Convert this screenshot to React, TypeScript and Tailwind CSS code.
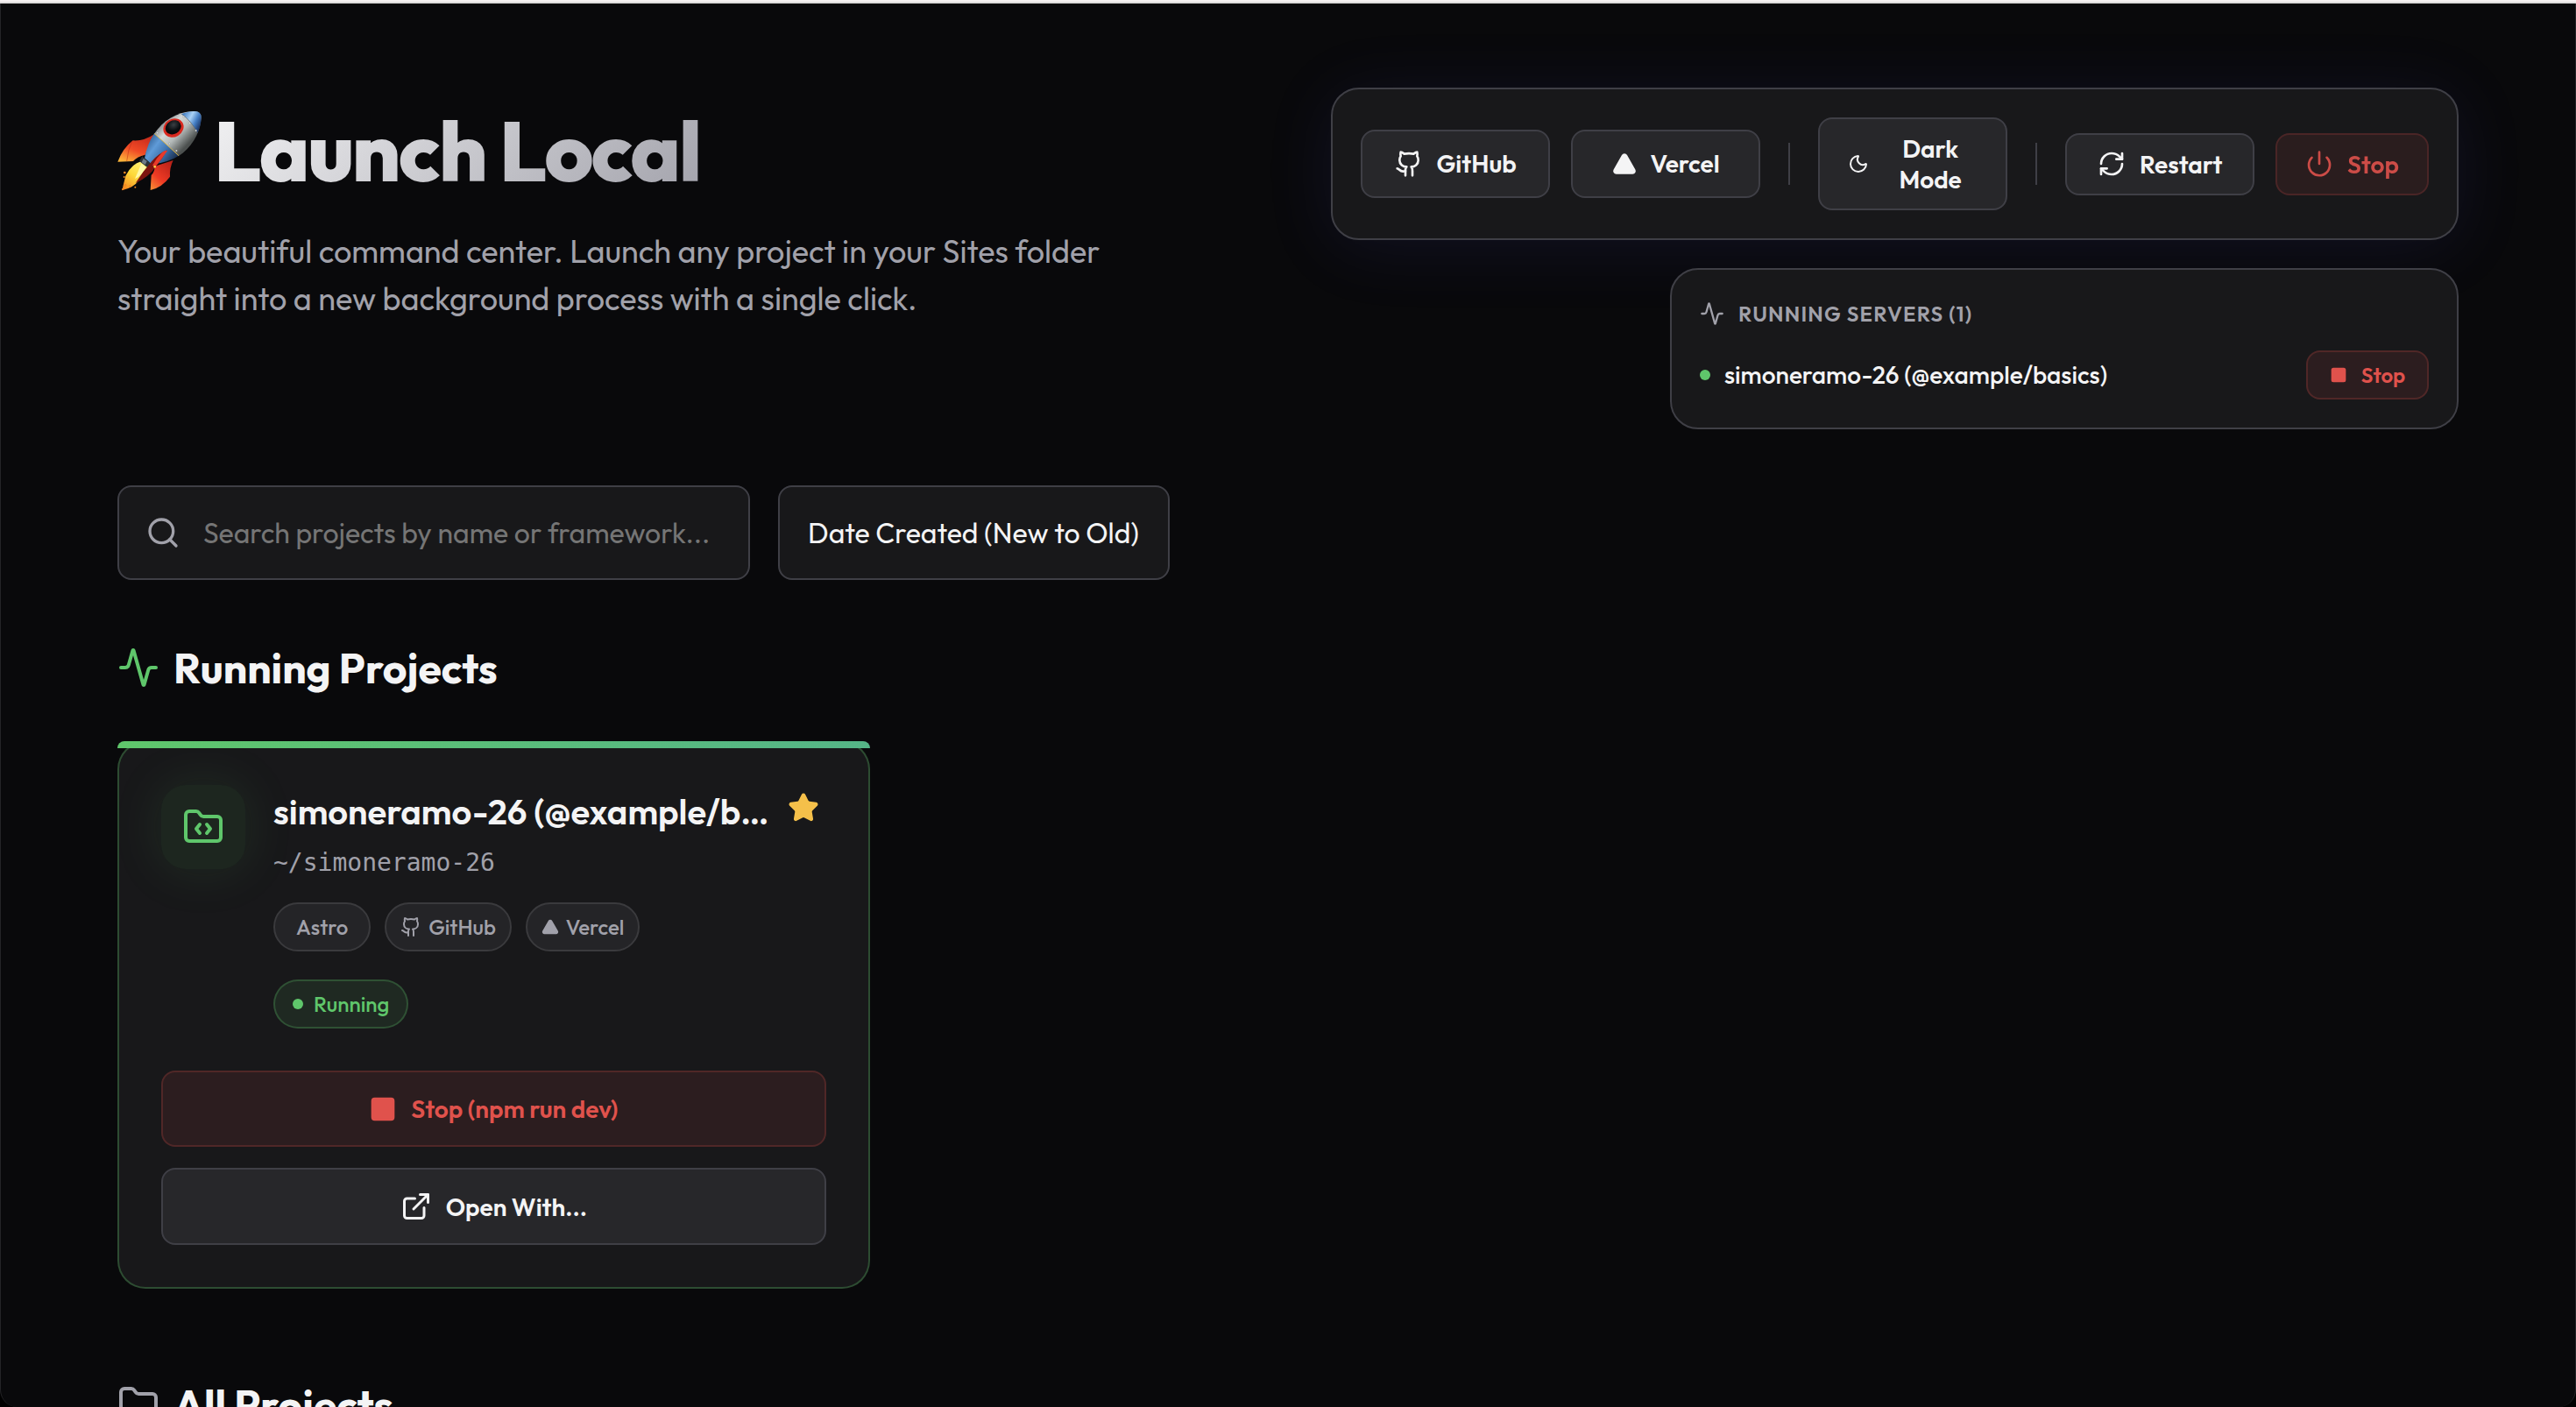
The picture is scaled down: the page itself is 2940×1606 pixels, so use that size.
import type { ReactNode } from "react";
import {
  Activity,
  ExternalLink,
  Folder,
  FolderCode,
  Github,
  Moon,
  Power,
  RefreshCw,
  Search,
  Square,
  Star,
  Triangle,
} from "lucide-react";

interface Project {
  name: string;
  path: string;
  framework: string;
  command: string;
}

const runningProjects: Project[] = [
  {
    name: "simoneramo-26 (@example/basics)",
    path: "~/simoneramo-26",
    framework: "Astro",
    command: "npm run dev",
  },
];

const toolButton =
  "flex w-[216px] items-center justify-center gap-4 rounded-2xl border-2 border-[#3f3f46] bg-[#27272a] px-8 py-4 text-[28px] font-semibold";
const dangerButton =
  "flex items-center justify-center gap-4 border-2 border-[#e0524c]/20 bg-[#e0524c]/10 font-semibold text-[#e0524c]";
const badge =
  "flex items-center gap-2 rounded-full border-2 py-2 text-[24px]/[36px] font-medium";

const Rocket = () => (
  <svg viewBox="402 372 288 288" className="h-24 w-24" role="img" aria-label="Rocket">
    <defs>
      <linearGradient id="finLeft" x1="0.7" y1="0" x2="0.2" y2="1">
        <stop offset="0" stopColor="#c62a1c" />
        <stop offset="0.55" stopColor="#f04a26" />
        <stop offset="1" stopColor="#fdb53a" />
      </linearGradient>
      <linearGradient id="finRight" x1="0.8" y1="0" x2="0.1" y2="1">
        <stop offset="0" stopColor="#b82219" />
        <stop offset="0.6" stopColor="#ee3a24" />
        <stop offset="1" stopColor="#f98a35" />
      </linearGradient>
      <linearGradient id="hull" x1="0.2" y1="0.2" x2="0.75" y2="0.7">
        <stop offset="0" stopColor="#85888a" />
        <stop offset="0.3" stopColor="#d4d8d8" />
        <stop offset="0.6" stopColor="#b4bab9" />
        <stop offset="1" stopColor="#4c504f" />
      </linearGradient>
      <linearGradient id="blueHull" x1="0" y1="0.2" x2="0.9" y2="0.8">
        <stop offset="0" stopColor="#2c5688" />
        <stop offset="0.35" stopColor="#5f9bd8" />
        <stop offset="0.65" stopColor="#3f73ae" />
        <stop offset="1" stopColor="#1c3253" />
      </linearGradient>
      <linearGradient id="nose" x1="0.1" y1="0.1" x2="1" y2="0.6">
        <stop offset="0" stopColor="#3f7cc4" />
        <stop offset="0.4" stopColor="#a9d1f5" />
        <stop offset="0.7" stopColor="#4680c6" />
        <stop offset="1" stopColor="#1b3566" />
      </linearGradient>
      <linearGradient id="flame" x1="0.8" y1="0" x2="0.1" y2="1">
        <stop offset="0" stopColor="#fff27a" />
        <stop offset="0.5" stopColor="#fdd93a" />
        <stop offset="1" stopColor="#f4831f" />
      </linearGradient>
      <radialGradient id="glass" cx="0.6" cy="0.35" r="0.7">
        <stop offset="0" stopColor="#3a3f44" />
        <stop offset="0.6" stopColor="#0b0d10" />
        <stop offset="1" stopColor="#050607" />
      </radialGradient>
    </defs>
    <path d="M455 481Q492 484 528 460L497 530Q470 536 456 552L403 554Q420 508 455 481Z" fill="url(#finLeft)" />
    <path d="M452 484Q438 512 434 552" stroke="#b92a17" strokeWidth="1.5" fill="none" />
    <path d="M593 549Q580 575 582 605Q555 642 515 651L518 600Q532 585 528 570Z" fill="url(#finRight)" />
    <path d="M483 553L513 570Q506 604 472 622Q458 642 418 652Q424 625 430 602Q452 560 483 553Z" fill="url(#flame)" />
    <path d="M484 560L500 572Q490 598 462 612Q474 585 484 560Z" fill="#fff9a8" />
    <path d="M487 535L516 560L507 575L477 552Z" fill="#2b3238" />
    <path d="M491 543L503 552L497 564L485 556Z" fill="#6d7b88" />
    <path d="M528 458C558 414 602 384 662 381Q691 381 689 405C684 462 652 508 612 534Z" fill="url(#hull)" />
    <path d="M528 457L612 533Q580 555 520 563L495 541Q504 494 528 457Z" fill="url(#blueHull)" />
    <path d="M528 457L612 533" stroke="#d8b64a" strokeWidth="3" />
    <path d="M621 390Q650 380 668 381Q690 382 689 405Q688 432 676 455Q656 414 621 390Z" fill="url(#nose)" />
    <path d="M621 390Q656 414 676 455" stroke="#5d6468" strokeWidth="2" fill="none" />
    <ellipse cx="594" cy="438" rx="36" ry="31" transform="rotate(-30 594 438)" fill="#d9291f" />
    <ellipse cx="593" cy="436" rx="28" ry="23" transform="rotate(-30 593 436)" fill="url(#glass)" />
    <path d="M572 514Q545 524 520 552Q488 588 464 627Q510 606 534 570Q556 545 572 514Z" fill="#7d140f" />
    <path d="M573 516Q566 512 552 525Q535 542 522 566L532 571Q552 548 573 516Z" fill="#e83a2a" />
    <g fill="#e8eaea" stroke="#6b6f70" strokeWidth="1">
      <circle cx="629" cy="400" r="3" />
      <circle cx="650" cy="422" r="3" />
      <circle cx="671" cy="447" r="3" />
      <circle cx="539" cy="455" r="3" />
      <circle cx="580" cy="492" r="3" />
      <circle cx="604" cy="516" r="3" />
    </g>
    <circle cx="530" cy="571" r="4" fill="#fdd44a" />
    <g fill="#f08a24">
      <circle cx="427" cy="591" r="4" />
      <circle cx="425" cy="606" r="3" />
      <circle cx="428" cy="634" r="5" />
      <circle cx="445" cy="638" r="4" />
      <circle cx="420" cy="648" r="3" />
      <circle cx="463" cy="641" r="3" />
      <circle cx="438" cy="622" r="4" fill="#fbb02f" />
    </g>
  </svg>
);

const Divider = () => <div className="mx-2 h-12 w-[2px] shrink-0 bg-[#3f3f46]" />;

const Toolbar = () => (
  <div className="flex items-center gap-6 rounded-[32px] border-2 border-[#3f3f46] bg-[#18181a] p-8 shadow-[0_8px_80px_rgba(99,102,241,0.1)]">
    <a href="#github" className={toolButton}>
      <Github size={32} />
      GitHub
    </a>
    <a href="#vercel" className={toolButton}>
      <Triangle size={28} fill="currentColor" />
      Vercel
    </a>
    <Divider />
    <button className={`${toolButton} leading-[35px]`}>
      <Moon size={24} className="shrink-0" />
      <span className="flex-1">Dark Mode</span>
    </button>
    <Divider />
    <button className={`${toolButton} leading-[35px]`}>
      <RefreshCw size={32} />
      Restart
    </button>
    <button className={`${dangerButton} rounded-2xl px-8 py-4 text-[28px]/[35px] opacity-90`}>
      <Power size={32} />
      Stop
    </button>
  </div>
);

const RunningServers = () => (
  <div className="w-[900px] rounded-[32px] border-2 border-[#3f3f46] bg-[#18181a] p-8">
    <h3 className="mb-6 flex items-center gap-4 text-[24px]/[36px] font-semibold uppercase tracking-wider text-[#a1a1aa]">
      <Activity size={28} />
      Running Servers ({runningProjects.length})
    </h3>
    {runningProjects.map((project) => (
      <div key={project.path} className="flex items-center justify-between">
        <span className="flex items-center gap-4 text-[28px]/[42px] font-medium">
          <span className="h-3 w-3 rounded-full bg-[#5fc66b]" />
          {project.name}
        </span>
        <button className={`${dangerButton} h-14 w-[140px] rounded-2xl text-[24px]`}>
          <Square size={20} fill="currentColor" />
          Stop
        </button>
      </div>
    ))}
  </div>
);

const ProjectCard = ({ project }: { project: Project }) => (
  <article className="relative rounded-[32px] border-2 border-[#5fc66b]/30 bg-[#18181a] p-12">
    <div className="absolute -inset-x-[2px] -top-[2px] h-2 rounded-t-lg bg-linear-to-r from-[#5fc66b] to-[#55b587]" />
    <div className="mb-12 flex gap-8">
      <div className="flex h-24 w-24 shrink-0 items-center justify-center rounded-[28px] bg-[#5fc66b]/8 text-[#5fc66b] shadow-[0_0_60px_rgba(95,198,107,0.12)]">
        <FolderCode size={48} />
      </div>
      <div className="min-w-0 flex-1">
        <div className="flex items-start gap-2">
          <h3 className="flex-1 truncate text-[40px]/[60px] font-semibold">{project.name}</h3>
          <button aria-label="Remove from favorites" className="p-2 text-[#f5c04a]">
            <Star size={36} fill="currentColor" />
          </button>
        </div>
        <p className="mt-2 font-['DejaVu_Sans_Mono',monospace] text-[28px]/[42px] text-[#a1a1aa]">
          {project.path}
        </p>
        <div className="mt-6 flex flex-wrap gap-x-4 gap-y-8">
          <span className={`${badge} border-[#3a3a3d] bg-[#242427] px-6 text-[#a1a1aa]`}>
            {project.framework}
          </span>
          <a href="#github" className={`${badge} border-[#3a3a3d] bg-[#242427] px-4 text-[#a1a1aa]`}>
            <Github size={24} />
            GitHub
          </a>
          <a href="#vercel" className={`${badge} border-[#3a3a3d] bg-[#242427] px-4 text-[#a1a1aa]`}>
            <Triangle size={20} fill="currentColor" />
            Vercel
          </a>
          <div className="flex w-full">
            <span className={`${badge} border-[#5fc66b]/25 bg-[#5fc66b]/10 px-5 text-[#5fc66b]`}>
              <span className="mr-1 h-3 w-3 rounded-full bg-[#5fc66b]" />
              Running
            </span>
          </div>
        </div>
      </div>
    </div>
    <div className="flex flex-col gap-6">
      <button className={`${dangerButton} rounded-2xl py-6 text-[28px]/[35px]`}>
        <Square size={32} fill="currentColor" />
        Stop ({project.command})
      </button>
      <button className="flex items-center justify-center gap-4 rounded-2xl border-2 border-[#3f3f46] bg-[#27272a] py-6 text-[28px]/[35px] font-semibold">
        <ExternalLink size={36} />
        Open With...
      </button>
    </div>
  </article>
);

const SectionTitle = ({ icon, children }: { icon: ReactNode; children: ReactNode }) => (
  <h2 className="mb-12 flex items-center gap-4 text-[48px]/[72px] font-bold">
    {icon}
    {children}
  </h2>
);

export default function App() {
  return (
    <div className="flex h-screen flex-col overflow-hidden bg-black font-['Outfit','Lato',sans-serif] text-[#f4f4f5]">
      <div className="h-1 shrink-0 border-b-2 border-[#dedcdd] bg-[#f6f1f2]" />
      <main className="min-h-0 flex-1 overflow-hidden rounded-b-[20px] border-x border-[#242427] bg-[#09090b] px-[133px] pt-24">
        <header className="mb-16 flex items-start justify-between gap-16">
          <div className="max-w-[1200px]">
            <h1 className="mb-4 flex items-center gap-[14px] text-[96px]/[144px] font-extrabold tracking-tight">
              <Rocket />
              <span className="bg-linear-135 from-[#f4f4f5] to-[#a1a1aa] bg-clip-text text-transparent">
                Launch Local
              </span>
            </h1>
            <p className="text-[36px]/[54px] text-[#a1a1aa]">
              Your beautiful command center. Launch any project in your Sites folder straight into a new
              background process with a single click.
            </p>
          </div>
          <div className="flex shrink-0 flex-col items-end gap-8">
            <Toolbar />
            <RunningServers />
          </div>
        </header>

        <div className="mb-16 flex gap-8">
          <div className="relative w-[722px]">
            <Search size={40} className="absolute inset-y-0 left-8 my-auto text-[#a1a1aa]" />
            <input
              type="text"
              aria-label="Search projects"
              placeholder="Search projects by name or framework..."
              className="w-full rounded-2xl border-2 border-[#3f3f46] bg-[#18181a] py-8 pr-8 pl-24 text-[32px]/[40px] placeholder:text-[#757575]"
            />
          </div>
          <select
            aria-label="Sort projects"
            className="appearance-none rounded-2xl border-2 border-[#3f3f46] bg-[#18181a] px-8 text-[32px]/[40px]"
          >
            <option>Date Created (New to Old)</option>
          </select>
        </div>

        <section className="mb-24">
          <SectionTitle icon={<Activity size={48} className="text-[#5fc66b]" />}>Running Projects</SectionTitle>
          <div className="grid grid-cols-3 gap-12">
            {runningProjects.map((project) => (
              <ProjectCard key={project.path} project={project} />
            ))}
          </div>
        </section>

        <section>
          <SectionTitle icon={<Folder size={48} className="text-[#a1a1aa]" />}>All Projects</SectionTitle>
        </section>
      </main>
    </div>
  );
}
